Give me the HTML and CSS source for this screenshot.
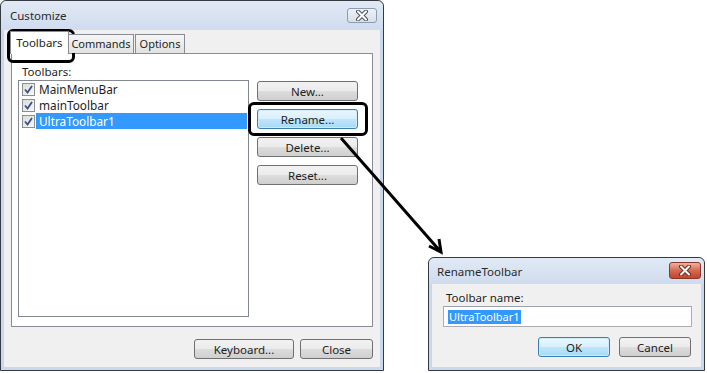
FILE: index.html
```html
<!DOCTYPE html>
<html lang="en">
<head>
  <meta charset="UTF-8" />
  <title>Customize</title>
  <link rel="stylesheet" href="styles.css">
</head>
<body>
  <div class="stage">
    <!-- Customize dialog -->
    <div class="win customize">
      <div class="titlebar">
        <span class="title">Customize</span>
        <span class="close-btn">
          <svg width="16" height="11" viewBox="0 0 16 11"><path d="M4 1.5 L12 9.5 M12 1.5 L4 9.5" stroke="#4f5660" stroke-width="4" stroke-linecap="round"/><path d="M4 1.5 L12 9.5 M12 1.5 L4 9.5" stroke="#fff" stroke-width="2" stroke-linecap="round"/></svg>
        </span>
      </div>
      <div class="client">
        <div class="tabs">
          <span class="tab active">Toolbars</span>
          <span class="tab tab-commands">Commands</span>
          <span class="tab tab-options">Options</span>
        </div>
        <div class="panel">
          <div class="label">Toolbars:</div>
          <div class="panel-row">
            <div class="listbox">
              <div class="item"><span class="check"><svg width="9" height="9" viewBox="0 0 9 9"><path d="M1 4.5 L3.5 7.5 L8 1" fill="none" stroke="#3d4f8a" stroke-width="1.8"/></svg></span><span class="item-text">MainMenuBar</span></div>
              <div class="item"><span class="check"><svg width="9" height="9" viewBox="0 0 9 9"><path d="M1 4.5 L3.5 7.5 L8 1" fill="none" stroke="#3d4f8a" stroke-width="1.8"/></svg></span><span class="item-text">mainToolbar</span></div>
              <div class="item selected"><span class="check"><svg width="9" height="9" viewBox="0 0 9 9"><path d="M1 4.5 L3.5 7.5 L8 1" fill="none" stroke="#3d4f8a" stroke-width="1.8"/></svg></span><span class="item-text">UltraToolbar1</span></div>
            </div>
            <div class="side-buttons">
              <button class="btn">New...</button>
              <button class="btn focus">Rename...</button>
              <button class="btn">Delete...</button>
              <button class="btn">Reset...</button>
            </div>
          </div>
        </div>
        <div class="footer">
          <button class="btn keyboard">Keyboard...</button>
          <button class="btn closebtn">Close</button>
        </div>
      </div>
    </div>

    <!-- RenameToolbar dialog -->
    <div class="rename-area">
      <div class="win rename">
        <div class="titlebar small">
          <span class="title">RenameToolbar</span>
          <span class="close-btn red">
            <svg width="16" height="11" viewBox="0 0 16 11"><path d="M4 1.5 L12 9.5 M12 1.5 L4 9.5" stroke="#7a2a1c" stroke-width="4" stroke-linecap="round"/><path d="M4 1.5 L12 9.5 M12 1.5 L4 9.5" stroke="#fff" stroke-width="2" stroke-linecap="round"/></svg>
          </span>
        </div>
        <div class="client rename-client">
          <div class="label">Toolbar name:</div>
          <div class="textbox"><span class="sel">UltraToolbar1</span></div>
          <div class="rename-buttons">
            <button class="btn focus dlg">OK</button>
            <button class="btn dlg">Cancel</button>
          </div>
        </div>
      </div>
    </div>

    <!-- annotation overlays -->
    <div class="callout callout-tab"></div>
    <div class="callout callout-rename"></div>
    <svg class="arrow" width="707" height="373" viewBox="0 0 707 373">
      <line x1="341" y1="138" x2="440" y2="251" stroke="#000" stroke-width="3"/>
      <polyline points="429,246 441,252 439,239" fill="none" stroke="#000" stroke-width="3" stroke-linejoin="miter"/>
    </svg>
  </div>
</body>
</html>
```

FILE: styles.css
```css
body {
  margin: 0;
  background: #fff;
  font-family: "Noto Sans", "Open Sans", sans-serif;
  font-size: 11px;
  color: #1e1e1e;
}
.stage {
  position: relative;
  width: 707px;
  height: 373px;
  display: flex;
  overflow: hidden;
}

/* window frames */
.win {
  box-sizing: border-box;
  border: 1px solid #353a42;
  border-radius: 6px 6px 0 0;
  background: #c9d8ec;
  padding: 0 3px 3px 3px;
  display: flex;
  flex-direction: column;
}
.customize {
  width: 384px;
  height: 371px;
}
.titlebar {
  height: 29px;
  display: flex;
  align-items: center;
  justify-content: space-between;
  background: linear-gradient(#e1eaf5, #cfdcee);
  margin: 0 -3px;
  padding: 0 6px 0 9px;
  border-radius: 6px 6px 0 0;
}
.titlebar.small {
  height: 26px;
  padding: 0 3px 0 8px;
}
.title {
  font-size: 11.5px;
  color: #2a2a2a;
}
.close-btn {
  width: 30px;
  height: 15px;
  box-sizing: border-box;
  border: 1px solid #8f9caf;
  border-radius: 3px;
  background: linear-gradient(#eef2f7, #d7dfe9);
  display: flex;
  align-items: center;
  justify-content: center;
  margin-top: -1px;
}
.close-btn.red {
  width: 32px;
  height: 17px;
  border-color: #8a3828;
  background: linear-gradient(#eeb1a0, #d36a52 50%, #c2452c);
  margin-top: -2px;
}
.client {
  flex: 1;
  background: #f0f0f0;
  display: flex;
  flex-direction: column;
  padding: 1px 6px 7px 7px;
}

/* tabs */
.tabs {
  display: flex;
  align-items: flex-end;
  height: 22px;
  position: relative;
  z-index: 1;
}
.tab {
  box-sizing: border-box;
  height: 19px;
  border: 1px solid #898c95;
  border-bottom: none;
  background: linear-gradient(#f6f6f6, #e2e2e2);
  line-height: 18px;
  text-align: center;
  font-size: 11px;
}
.tab.active {
  width: 59px;
  height: 23px;
  background: #fff;
  margin-bottom: -1px;
  margin-left: -1px;
  line-height: 21px;
  font-size: 11.5px;
}
.tab-commands {
  width: 65px;
  border-left: none;
}
.tab-options {
  width: 50px;
  margin-left: 1px;
}
.panel {
  box-sizing: border-box;
  height: 274px;
  width: 362px;
  border: 1px solid #898c95;
  background: #fff;
  padding: 10px 13px 9px 6px;
  display: flex;
  flex-direction: column;
}
.label {
  height: 15px;
  line-height: 15px;
  padding-left: 4px;
  margin-bottom: 1px;
  font-size: 11.5px;
}
.panel-row {
  flex: 1;
  display: flex;
  gap: 8px;
}
.listbox {
  box-sizing: border-box;
  width: 231px;
  border: 1px solid #828790;
}
.item {
  height: 16px;
  display: flex;
  align-items: center;
  padding-left: 3px;
  font-size: 11.8px;
}
.check {
  box-sizing: border-box;
  width: 13px;
  height: 13px;
  border: 1px solid #8e8f8f;
  background: linear-gradient(135deg, #dcdcdc, #f8f8f8);
  display: flex;
  align-items: center;
  justify-content: center;
  margin-right: 1px;
}
.item-text {
  padding: 0 3px;
  height: 16px;
  line-height: 16px;
}
.item.selected .item-text {
  flex: 1;
  margin-right: 1px;
  background: #3399ff;
  color: #fff;
}
.side-buttons {
  display: flex;
  flex-direction: column;
  gap: 8px;
  padding-top: 1px;
}

/* buttons */
.btn {
  box-sizing: border-box;
  width: 101px;
  height: 20px;
  border: 1px solid #707070;
  border-radius: 3px;
  background: linear-gradient(#f2f2f2 0%, #ebebeb 50%, #dddddd 51%, #cfcfcf 100%);
  font-family: "Noto Sans", "Open Sans", sans-serif;
  font-size: 11.5px;
  color: #1e1e1e;
  padding: 0;
  line-height: 17px;
}
.btn.focus {
  border-color: #3c7fb1;
  background: linear-gradient(#eaf6fd 0%, #d9f0fc 50%, #bee6fd 51%, #a7d9f5 100%);
  box-shadow: inset 0 0 0 1px #cdecfb;
}
.footer {
  display: flex;
  justify-content: flex-end;
  gap: 6px;
  margin-top: 12px;
  padding-right: 1px;
}
.btn.keyboard { width: 100px; }
.btn.closebtn { width: 73px; }

/* rename dialog */
.rename-area {
  flex: 1;
  display: flex;
  align-items: flex-end;
  padding: 0 0 2px 44px;
}
.rename {
  width: 277px;
  height: 114px;
}
.rename-client {
  padding: 6px 9px 6px 11px;
}
.rename-client .label {
  padding-left: 3px;
  margin-bottom: 1px;
}
.textbox {
  box-sizing: border-box;
  height: 21px;
  border: 1px solid #abadb3;
  border-top-color: #9da1a8;
  background: #fff;
  padding: 2px 0 0 4px;
}
.sel {
  background: #3399ff;
  color: #fff;
  display: inline-block;
  height: 14px;
  line-height: 14px;
  padding: 0 1px;
  font-size: 11px;
}
.rename-buttons {
  display: flex;
  justify-content: flex-end;
  gap: 9px;
  margin-top: 10px;
  padding-right: 1px;
}
.btn.dlg { width: 72px; }

/* annotations */
.callout {
  position: absolute;
  border: 3px solid #000;
  border-radius: 6px;
  box-sizing: border-box;
}
.callout-tab {
  left: 7px;
  top: 29px;
  width: 68px;
  height: 34px;
}
.callout-rename {
  left: 248px;
  top: 102px;
  width: 120px;
  height: 34px;
}
.arrow {
  position: absolute;
  left: 0;
  top: 0;
}
```
